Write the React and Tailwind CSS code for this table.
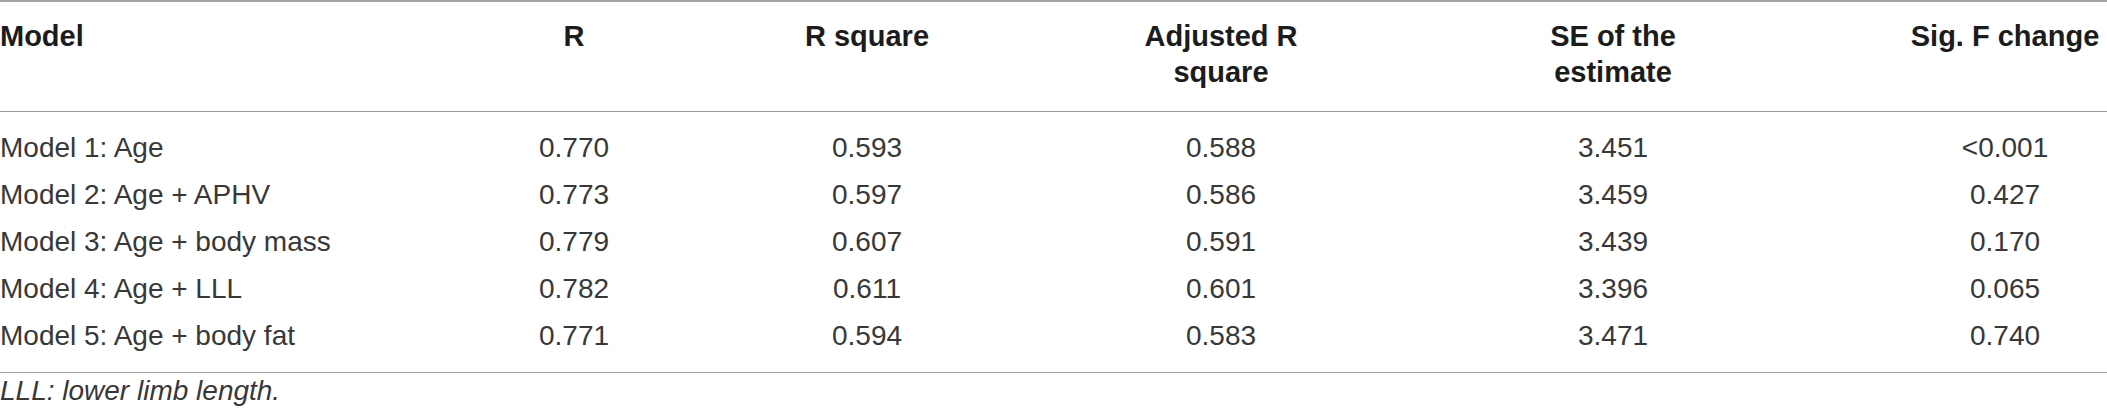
import React from 'react';

const rows = [
    ['Model 1: Age', '0.770', '0.593', '0.588', '3.451', '<0.001'],
    ['Model 2: Age + APHV', '0.773', '0.597', '0.586', '3.459', '0.427'],
    ['Model 3: Age + body mass', '0.779', '0.607', '0.591', '3.439', '0.170'],
    ['Model 4: Age + LLL', '0.782', '0.611', '0.601', '3.396', '0.065'],
    ['Model 5: Age + body fat', '0.771', '0.594', '0.583', '3.471', '0.740'],
];

const cols = 'grid grid-cols-[533px_82px_504px_204px_580px_204px]';

function App() {
    return (
        <div className="w-[2107px] h-[415px] bg-white text-[#231f20] font-['Liberation_Sans',Arial,sans-serif]">
            <div className="border-t-2 border-[#a3a3a3]">
                <div className={`${cols} pt-[16px] pb-[21px] border-b border-[#9a9a9a] text-[29px] leading-[36px] font-bold text-[#1c1c1c]`}>
                    <div>Model</div>
                    <div className="text-center">R</div>
                    <div className="text-center">R square</div>
                    <div className="text-center whitespace-nowrap">Adjusted R<br />square</div>
                    <div className="text-center whitespace-nowrap">SE of the<br />estimate</div>
                    <div className="text-center whitespace-nowrap">Sig. F change</div>
                </div>

                <div className="pt-[12px] pb-[13px] border-b border-[#a0a0a0] text-[28px] leading-[47px] text-[#383838]">
                    {rows.map((row, i) => (
                        <div key={i} className={cols}>
                            {row.map((cell, j) => (
                                <div key={j} className={j === 0 ? 'whitespace-nowrap' : 'text-center'}>
                                    {cell}
                                </div>
                            ))}
                        </div>
                    ))}
                </div>

                <p className="text-[28px] leading-[36px] italic text-[#383838]">LLL: lower limb length.</p>
            </div>
        </div>
    );
}

export default App;
